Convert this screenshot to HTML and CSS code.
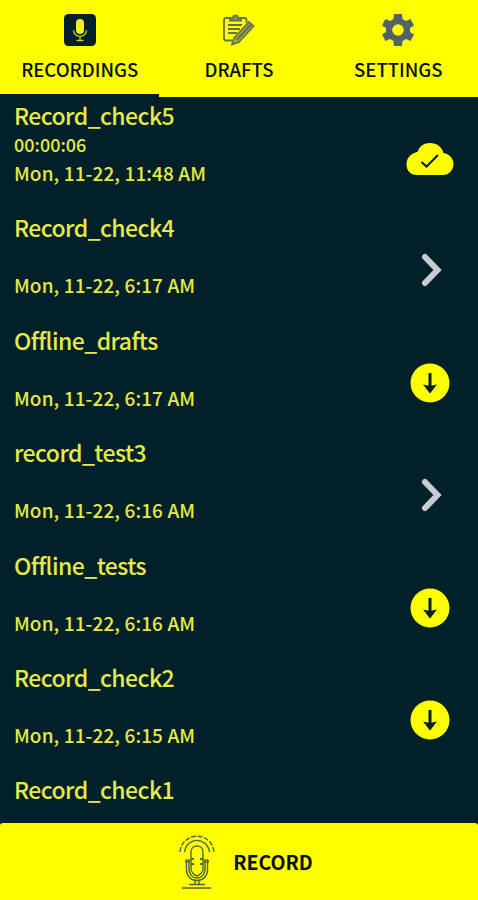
FILE: index.html
```
<!DOCTYPE html>
<html lang="en">

<head>
    <meta charset="UTF-8">
    <meta name="viewport" content="width=device-width, initial-scale=1.0">
    <title>Recordings</title>
    <link rel="stylesheet" href="styles.css">
</head>

<body>
    <!-- Shared row icons -->
    <svg class="sprite">
        <symbol id="cloud" viewBox="0 0 50 36">
            <path d="M12 34C5 34 1.500 29 1.500 23.500C1.500 16 7 12 12.500 11C14.500 5 19 2 25 2C32 2 37 6 38.500 12C44.500 13 48.500 17.500 48.500 23C48.500 29 44 34 38 34Z" fill="#ff0" />
            <path d="M16.500 21L21.500 25.500L33 14" fill="none" stroke="#02202a" stroke-width="2" />
        </symbol>
        <symbol id="chevron" viewBox="0 0 24 36">
            <path d="M5 5L17.500 18L5 31" fill="none" stroke="#c9cbd3" stroke-width="6" stroke-linecap="round" />
        </symbol>
        <symbol id="download" viewBox="0 0 40 40">
            <circle cx="20" cy="20" r="19.500" fill="#ff0" />
            <path d="M20 10V24" stroke="#02202a" stroke-width="3" />
            <path d="M13 21.500L20 23L27 21.500L20 30.500Z" fill="#02202a" />
        </symbol>
    </svg>

    <!-- Tab links -->
    <div class="tab">
        <button class="tablinks active">
            <svg width="32" height="32" viewBox="0 0 32 32">
                <rect width="32" height="32" rx="4.500" fill="#02202a" />
                <rect x="12" y="5" width="8" height="15" rx="4" fill="#f2ee20" />
                <path d="M9.500 16C9.500 24.500 22.500 24.500 22.500 16M16 22.500V26M12.500 26.500H19.500" fill="none" stroke="#c8c92a" stroke-width="1.300" />
            </svg>
            <span>RECORDINGS</span>
        </button>
        <button class="tablinks">
            <svg width="32" height="32" viewBox="0 0 32 32" fill="none" stroke="#66734a" stroke-width="1.800">
                <path d="M7 4H3C1.500 4 1 5 1 6V24C1 25.500 2 26.500 3 26.500H9M18 4H21.500C23 4 23.500 5 23.500 6V9" />
                <path d="M7 6.500V4H10C10 .5 15 .5 15 4H18V6.500Z" fill="#8a9360" />
                <path d="M5 11H19M5 15H17M5 19H14" />
                <path d="M11 24L26 8L30.500 12L16 28L9 30.500Z" fill="#a9ad45" />
                <path d="M13.500 26L28 10.500" stroke-width="2.500" />
            </svg>
            <span>DRAFTS</span>
        </button>
        <button class="tablinks">
            <svg width="32" height="32" viewBox="0 0 32 32">
                <path d="M12 0H20L20.500 5L24 7L28.500 5L32 11.500L28 14V18L32 20.500L28.500 27L24 25L20.500 27L20 32H12L11.500 27L8 25L3.500 27L0 20.500L4 18V14L0 11.500L3.500 5L8 7L11.500 5ZM16 10.200A5.800 5.800 0 1 0 16 21.800A5.800 5.800 0 1 0 16 10.200Z" fill="#526269" />
            </svg>
            <span>SETTINGS</span>
        </button>
    </div>

    <!-- Recording list -->
    <div class="list">
        <div class="item">
            <div class="info">
                <h3>Record_check5</h3>
                <p class="duration">00:00:06</p>
                <p class="date">Mon, 11-22, 11:48 AM</p>
            </div>
            <svg class="cloud"><use href="#cloud" /></svg>
        </div>
        <div class="item">
            <div class="info">
                <h3>Record_check4</h3>
                <p class="duration"></p>
                <p class="date">Mon, 11-22, 6:17 AM</p>
            </div>
            <svg class="chevron"><use href="#chevron" /></svg>
        </div>
        <div class="item">
            <div class="info">
                <h3>Offline_drafts</h3>
                <p class="duration"></p>
                <p class="date">Mon, 11-22, 6:17 AM</p>
            </div>
            <svg class="download"><use href="#download" /></svg>
        </div>
        <div class="item">
            <div class="info">
                <h3>record_test3</h3>
                <p class="duration"></p>
                <p class="date">Mon, 11-22, 6:16 AM</p>
            </div>
            <svg class="chevron"><use href="#chevron" /></svg>
        </div>
        <div class="item">
            <div class="info">
                <h3>Offline_tests</h3>
                <p class="duration"></p>
                <p class="date">Mon, 11-22, 6:16 AM</p>
            </div>
            <svg class="download"><use href="#download" /></svg>
        </div>
        <div class="item">
            <div class="info">
                <h3>Record_check2</h3>
                <p class="duration"></p>
                <p class="date">Mon, 11-22, 6:15 AM</p>
            </div>
            <svg class="download"><use href="#download" /></svg>
        </div>
        <div class="item">
            <div class="info">
                <h3>Record_check1</h3>
            </div>
        </div>
    </div>

    <!-- Record button -->
    <button class="record">
        <svg width="36" height="54" viewBox="0 0 36 54" fill="none" stroke="#4c6640" stroke-width="1.400">
            <path d="M1 17C3 -4 33 -4 35 17" stroke-dasharray="5 1.500" />
            <path d="M5.500 17C8 1.500 28 1.500 30.500 17" />
            <path d="M12 34V17C12 9 24 9 24 17V34C24 37 21 40 18 41C15 40 12 37 12 34Z" />
            <path d="M7.500 24V35C7.500 41 12 45.500 18 45.500S28.500 41 28.500 35V24" />
            <path d="M10 24V34C10 39 13 43 18 43S26 39 26 34V24" />
            <path d="M6 26.500H11M25 26.500H30M12 24H15M21 24H24M12 29H15M21 29H24" stroke-width="2" />
            <path d="M16 46V49M20 46V49M10 49.500H26M3 53H32" />
        </svg>
        <span>RECORD</span>
    </button>
</body>

</html>
```
FILE: styles.css
```
body {
    display: flex;
    flex-direction: column;
    height: 900px;
    margin: 0;
    overflow: hidden;
    background-color: #02202a;
    font-family: "Noto Sans CJK SC", "Noto Sans", sans-serif;
}

button {
    border: none;
    padding: 0;
    background-color: #ff0;
    color: #05100a;
    font-family: inherit;
    cursor: pointer;
}

.sprite {
    display: none;
}

/* Style the tab */
.tab {
    display: grid;
    grid-template-columns: repeat(3, 1fr);
    flex: none;
    height: 97px;
    background-color: #ff0;
}

.tablinks {
    display: flex;
    flex-direction: column;
    align-items: center;
    gap: 9px;
    padding-top: 14px;
    border-bottom: 3px solid #ff0;
    font-size: 18.5px;
    font-weight: 500;
    line-height: 28px;
}

.tablinks.active {
    border-bottom-color: #02202a;
}

/* Recording list */
.list {
    flex: 1;
    min-height: 0;
    overflow: hidden;
}

.item {
    display: flex;
    justify-content: space-between;
    height: 112.4px;
    padding: 0 24px 0 14px;
    color: #e4ea48;
}

.info h3,
.info p {
    margin: 0;
    font-weight: 500;
    white-space: nowrap;
}

.info h3 {
    padding-top: 3px;
    font-size: 23px;
    line-height: 31px;
    letter-spacing: -0.55px;
}

.info .duration {
    height: 29px;
    font-size: 18px;
    line-height: 26px;
}

.info .date {
    font-size: 19px;
    line-height: 26px;
    letter-spacing: 0.1px;
}

.cloud {
    width: 50px;
    height: 36px;
    margin: 44px -1px 0 0;
}

.chevron {
    width: 24px;
    height: 36px;
    margin: 43px 10px 0 0;
}

.download {
    width: 40px;
    height: 40px;
    margin: 41px 4px 0 0;
}

/* Record button */
.record {
    display: flex;
    align-items: center;
    justify-content: center;
    gap: 18px;
    flex: none;
    height: 77px;
    padding-left: 14px;
    border-radius: 3px 3px 0 0;
    font-size: 19.5px;
    font-weight: 700;
}
```
